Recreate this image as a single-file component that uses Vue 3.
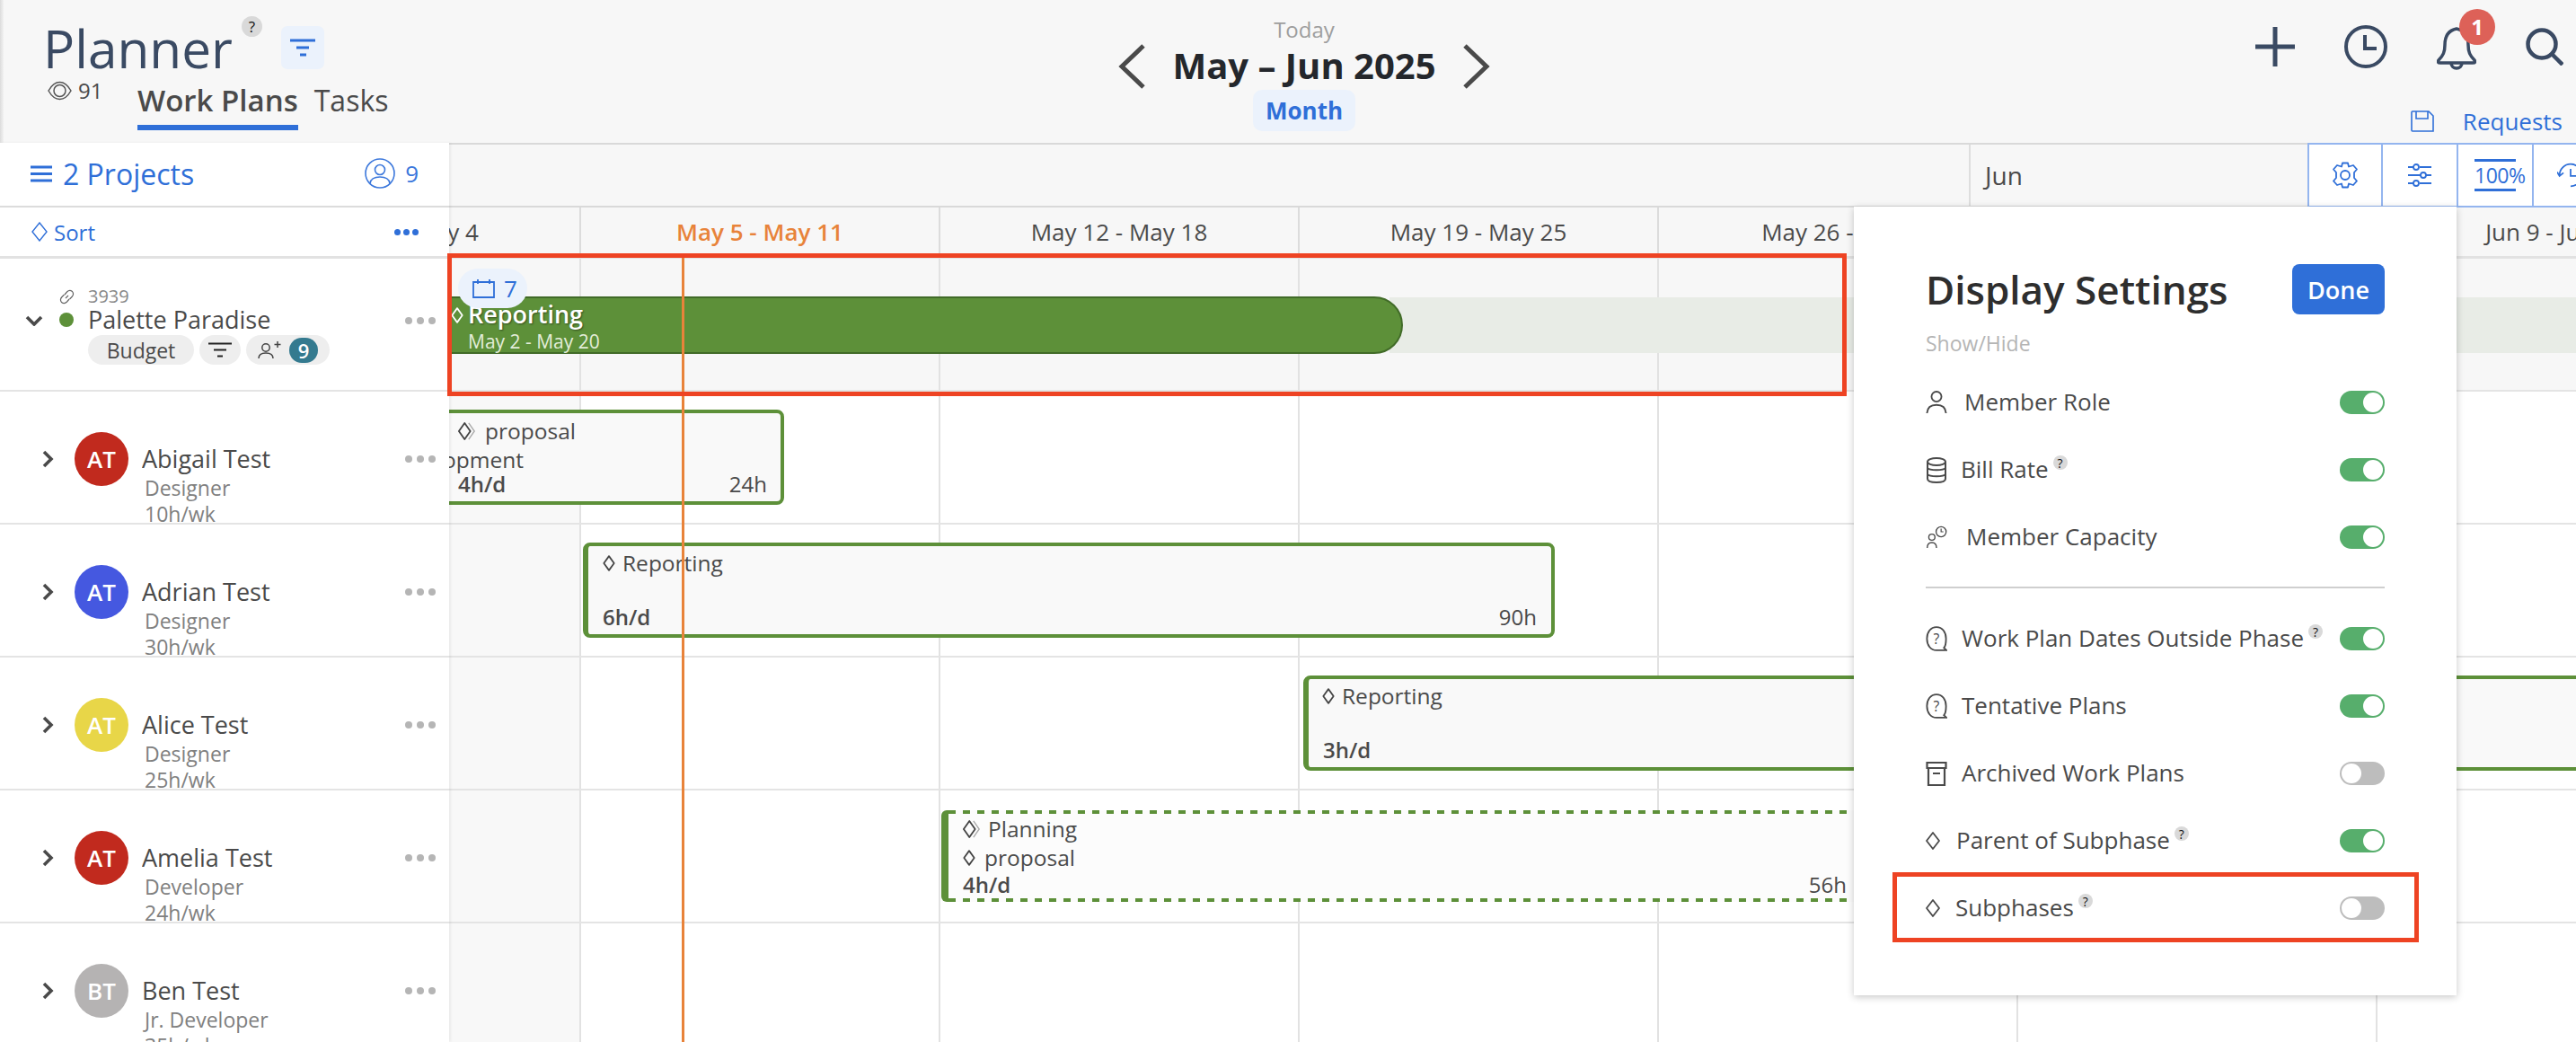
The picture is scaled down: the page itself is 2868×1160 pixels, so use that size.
<script setup>
const weeks = [
  { label: 'Apr 28 - May 4', past: true },
  { label: 'May 5 - May 11', current: true },
  { label: 'May 12 - May 18' },
  { label: 'May 19 - May 25' },
  { label: 'May 26 - Jun 1' },
  { label: 'Jun 2 - Jun 8' },
  { label: 'Jun 9 - Jun 15' },
]
const members = [
  { initials: 'AT', color: '#c12a1e', name: 'Abigail Test', role: 'Designer', hours: '10h/wk' },
  { initials: 'AT', color: '#4558e0', name: 'Adrian Test', role: 'Designer', hours: '30h/wk' },
  { initials: 'AT', color: '#e8d648', name: 'Alice Test', role: 'Designer', hours: '25h/wk' },
  { initials: 'AT', color: '#c12a1e', name: 'Amelia Test', role: 'Developer', hours: '24h/wk' },
  { initials: 'BT', color: '#b5b3b3', name: 'Ben Test', role: 'Jr. Developer', hours: '35h/wk' },
]
const settingsA = [
  { icon: 'i-user', label: 'Member Role', x: 43, on: true },
  { icon: 'i-db', label: 'Bill Rate', x: 39, on: true, help: true },
  { icon: 'i-cap', label: 'Member Capacity', x: 45, on: true },
]
const settingsB = [
  { icon: 'i-q', label: 'Work Plan Dates Outside Phase', x: 40, on: true, help: true },
  { icon: 'i-q', label: 'Tentative Plans', x: 40, on: true },
  { icon: 'i-box', label: 'Archived Work Plans', x: 40, on: false },
  { icon: 'i-pdia', label: 'Parent of Subphase', x: 34, on: true, help: true },
  { icon: 'i-pdia', label: 'Subphases', x: 33, on: false, help: true },
]
</script>

<template>
  <div class="app">
    <svg class="defs" width="0" height="0" aria-hidden="true">
      <symbol id="i-dia" viewBox="0 0 16 24"><path d="M8 3 L14.5 12 L8 21 L1.5 12 Z" fill="none" stroke="currentColor" stroke-width="2" stroke-linejoin="round" /></symbol>
      <symbol id="i-pdia" viewBox="0 0 24 30"><path d="M8 6 L15 15 L8 24 L1 15 Z" fill="none" stroke="currentColor" stroke-width="1.8" stroke-linejoin="round" /></symbol>
      <symbol id="i-dbl" viewBox="0 0 22 24"><path d="M8 2 L15 12 L8 22 L1 12 Z" fill="none" stroke="currentColor" stroke-width="2" stroke-linejoin="round" /><path d="M13 2 L20 12 L13 22" fill="none" stroke="#aaa" stroke-width="1.5" /></symbol>
      <symbol id="i-user" viewBox="0 0 26 30"><circle cx="13" cy="8" r="6" fill="none" stroke="currentColor" stroke-width="2" /><path d="M1.5 28 C2 20 7 18 13 18 C19 18 24 20 24.5 28" fill="none" stroke="currentColor" stroke-width="2" /></symbol>
      <symbol id="i-db" viewBox="0 0 24 30"><ellipse cx="12" cy="6" rx="10" ry="4" fill="none" stroke="currentColor" stroke-width="2" /><path d="M2 6 V25 C2 28 6 29 12 29 C18 29 22 28 22 25 V6 M2 13 C4 16 20 16 22 13 M2 20 C4 23 20 23 22 20" fill="none" stroke="currentColor" stroke-width="2" /></symbol>
      <symbol id="i-cap" viewBox="0 0 28 30"><circle cx="8" cy="15" r="4" fill="none" stroke="currentColor" stroke-width="1.6" /><path d="M2 29 C2 24 5 22 8 22 C11 22 14 24 14 29" fill="none" stroke="currentColor" stroke-width="1.6" /><circle cx="20" cy="8" r="6.5" fill="none" stroke="currentColor" stroke-width="1.6" /><path d="M20 4 V8 H23" fill="none" stroke="currentColor" stroke-width="1.4" /></symbol>
      <symbol id="i-q" viewBox="0 0 26 32"><path d="M25 30 H13 C6 30 1.5 24 1.5 16 C1.5 8 6 2 13 2 C20 2 24.5 8 24.5 16 C24.5 21 24 25 22 27 Z" fill="none" stroke="currentColor" stroke-width="2" /><text x="13" y="22" text-anchor="middle" font-size="17" font-family="Open Sans, sans-serif" fill="currentColor">?</text></symbol>
      <symbol id="i-box" viewBox="0 0 24 30"><path d="M1.5 3 H22.5 V9 H1.5 Z M3 9 V28 H21 V9 M8 15 H16" fill="none" stroke="currentColor" stroke-width="2.2" /></symbol>
    </svg>

    <header class="topbar">
      <div class="title-block">
        <div class="title-row">
          <h1 class="title">Planner</h1>
          <span class="help help-lg">?</span>
          <span class="filter-tile">
            <svg width="28" height="20" viewBox="0 0 28 20"><path d="M0 2 H28 M7 10 H21 M11 18 H18" stroke="#2f6fd8" stroke-width="3" fill="none" /></svg>
          </span>
        </div>
        <div class="sub-row">
          <span class="views">
            <svg width="27" height="22" viewBox="0 0 27 22"><path d="M1 11 C5 4 9 1.5 13.5 1.5 C18 1.5 22 4 26 11 C22 18 18 20.5 13.5 20.5 C9 20.5 5 18 1 11 Z" fill="none" stroke="#555" stroke-width="1.5" /><circle cx="13.5" cy="11" r="6.5" fill="none" stroke="#555" stroke-width="1.5" /></svg>
            91
          </span>
          <nav class="tabs">
            <span class="tab active">Work Plans</span>
            <span class="tab">Tasks</span>
          </nav>
        </div>
      </div>

      <div class="date-block">
        <svg class="chev" width="30" height="52" viewBox="0 0 30 52"><path d="M28 3 L4 26 L28 49" fill="none" stroke="#4a4a4a" stroke-width="5" /></svg>
        <div class="date-center">
          <span class="today">Today</span>
          <span class="range">May – Jun 2025</span>
          <span class="month-pill">Month</span>
        </div>
        <svg class="chev" width="30" height="52" viewBox="0 0 30 52"><path d="M2 3 L26 26 L2 49" fill="none" stroke="#4a4a4a" stroke-width="5" /></svg>
      </div>

      <div class="actions">
        <div class="action-icons">
          <svg width="44" height="44" viewBox="0 0 44 44"><path d="M22 0 V44 M0 22 H44" stroke="#3a4a63" stroke-width="5" /></svg>
          <svg width="48" height="48" viewBox="0 0 48 48"><circle cx="24" cy="24" r="22" fill="none" stroke="#3a4a63" stroke-width="4" /><path d="M23 11 V26 H36" fill="none" stroke="#3a4a63" stroke-width="4" /></svg>
          <span class="bell">
            <svg width="44" height="48" viewBox="0 0 44 48"><path d="M22 2 C12 4 9 12 9 20 C9 28 7 32 2 37 Q0 40 4 40 H40 Q44 40 42 37 C37 32 35 28 35 20 C35 12 32 4 22 2 Z M16 40 C16 48 28 48 28 40" fill="none" stroke="#3a4a63" stroke-width="3.5" /></svg>
            <span class="bell-badge">1</span>
          </span>
          <svg width="42" height="42" viewBox="0 0 42 42"><circle cx="18" cy="18" r="15.5" fill="none" stroke="#3a4a63" stroke-width="4.5" /><path d="M29 29 L41 41" stroke="#3a4a63" stroke-width="4.5" /></svg>
        </div>
        <div class="requests-row">
          <svg width="26" height="24" viewBox="0 0 26 24"><path d="M2 1 H20 L25 6 V23 H2 Q1 23 1 22 V2 Q1 1 2 1 Z M6 1 V9 H19 V1" fill="none" stroke="#2f6fd8" stroke-width="1.6" /></svg>
          <span class="requests">Requests</span>
        </div>
      </div>
    </header>

    <main class="board">
      <aside class="sidebar">
        <div class="side-head">
          <svg width="24" height="19" viewBox="0 0 24 19"><path d="M0 2 H24 M0 9.5 H24 M0 17 H24" stroke="#2f6fd8" stroke-width="3" /></svg>
          <span class="projects">2 Projects</span>
          <svg class="people-ic" width="34" height="34" viewBox="0 0 34 34"><circle cx="17" cy="17" r="16" fill="none" stroke="#3c78dc" stroke-width="1.6" /><circle cx="17" cy="13" r="5.5" fill="none" stroke="#3c78dc" stroke-width="1.6" /><path d="M6 28 C7 22 12 21 17 21 C22 21 27 22 28 28" fill="none" stroke="#3c78dc" stroke-width="1.6" /></svg>
          <span class="people-count">9</span>
        </div>
        <div class="side-sort">
          <svg width="18" height="22" viewBox="0 0 18 22"><path d="M9 1 L17 11 L9 21 L1 11 Z" fill="none" stroke="#2f6fd8" stroke-width="1.4" /></svg>
          <span class="sort">Sort</span>
          <span class="dots blue"><i></i><i></i><i></i></span>
        </div>
        <div class="side-project">
          <svg class="expand" width="20" height="12" viewBox="0 0 20 12"><path d="M2 2 L10 10 L18 2" fill="none" stroke="#4a4a4a" stroke-width="3.6" /></svg>
          <span class="status-dot"></span>
          <div class="project-info">
            <div class="proj-id">
              <svg class="link" width="17" height="17" viewBox="0 0 17 17"><path d="M7 10 L10 7 M6 6 L8.5 3 C10 1.5 12.5 1 14.5 2.5 C16 4.5 15.5 7 14 8.5 L11.5 11 M11 11 L8.5 14 C7 15.5 4.5 16 2.5 14.5 C1 12.5 1.5 10 3 8.5 L5.5 6" fill="none" stroke="#666" stroke-width="1.2" /></svg>
              <span>3939</span>
            </div>
            <div class="proj-name">Palette Paradise</div>
            <div class="pills">
              <span class="pill">Budget</span>
              <span class="pill pill-icon"><svg width="26" height="17" viewBox="0 0 26 17"><path d="M0 1.5 H26 M6 8.5 H20 M10 15.5 H16" stroke="#222" stroke-width="2" /></svg></span>
              <span class="pill pill-people">
                <svg width="26" height="20" viewBox="0 0 26 20"><circle cx="9" cy="7" r="4.2" fill="none" stroke="#444" stroke-width="1.5" /><path d="M1 19 C1 14 5 13 9 13 C13 13 17 14 17 19 M22 0 V7 M18.5 3.5 H25.5" fill="none" stroke="#444" stroke-width="1.5" /></svg>
                <span class="count-badge">9</span>
              </span>
            </div>
          </div>
          <span class="dots"><i></i><i></i><i></i></span>
        </div>
        <div v-for="m in members" :key="m.name" class="side-member">
          <svg class="expand-r" width="13" height="20" viewBox="0 0 13 20"><path d="M2 2 L10 10 L2 18" fill="none" stroke="#4a4a4a" stroke-width="3.6" /></svg>
          <span class="avatar" :style="{ background: m.color }">{{ m.initials }}</span>
          <div class="member-info">
            <div class="member-name">{{ m.name }}</div>
            <div class="member-sub">{{ m.role }}</div>
            <div class="member-sub">{{ m.hours }}</div>
          </div>
          <span class="dots"><i></i><i></i><i></i></span>
        </div>
      </aside>

      <section class="timeline">
        <div class="months">
          <span class="month-spacer"></span>
          <span class="month-cell">Jun</span>
          <div class="tools">
            <span class="tool">
              <svg width="30" height="30" viewBox="0 0 30 30"><path d="M12 1.5 H18 L19 5.5 L24 4 L28 8.5 L25 12 V18 L28 21.5 L24 26 L19 24.5 L18 28.5 H12 L11 24.5 L6 26 L2 21.5 L5 18 V12 L2 8.5 L6 4 L11 5.5 Z" fill="none" stroke="#2f6fd8" stroke-width="1.8" stroke-linejoin="round" /><circle cx="15" cy="15" r="5" fill="none" stroke="#2f6fd8" stroke-width="1.8" /></svg>
            </span>
            <span class="tool">
              <svg width="26" height="26" viewBox="0 0 26 26"><path d="M0 4 H6 M13 4 H26 M0 13 H14 M20 13 H26 M0 22 H6 M13 22 H26" stroke="#2f6fd8" stroke-width="2" /><circle cx="9" cy="4" r="3" fill="none" stroke="#2f6fd8" stroke-width="1.8" /><circle cx="17" cy="13" r="3" fill="none" stroke="#2f6fd8" stroke-width="1.8" /><circle cx="9" cy="22" r="3" fill="none" stroke="#2f6fd8" stroke-width="1.8" /></svg>
            </span>
            <span class="tool"><span class="pct">100%</span></span>
            <span class="tool tool-last">
              <svg width="30" height="30" viewBox="0 0 34 34"><path d="M3 17 A14 14 0 1 1 17 31 M0 13 L3 18 L8 14 M17 9 V18 H24" fill="none" stroke="#2f6fd8" stroke-width="2" /></svg>
            </span>
          </div>
        </div>

        <div class="weeks">
          <div v-for="w in weeks" :key="w.label" class="week-cell" :class="{ current: w.current }">{{ w.label }}</div>
        </div>

        <div class="track track-project">
          <div v-for="w in weeks" :key="w.label" class="cell"></div>
          <div class="band"></div>
          <div class="phase-bar">
            <svg class="phase-dia" width="14" height="24"><use href="#i-dia" /></svg>
            <div class="phase-name">Reporting</div>
            <div class="phase-dates">May 2 - May 20</div>
          </div>
          <span class="cal-chip">
            <svg width="25" height="22" viewBox="0 0 25 22"><path d="M1 4 H24 V21 H1 Z M6 1 V6 M19 1 V6" fill="none" stroke="#2f6fd8" stroke-width="1.8" /></svg>
            7
          </span>
        </div>

        <div v-for="(m, i) in members" :key="'t' + m.name" class="track">
          <div v-for="w in weeks" :key="w.label" class="cell" :class="{ past: w.past }"></div>

          <div v-if="i === 0" class="bar bar-abigail">
            <div class="bar-line first"><svg class="dbl" width="20" height="24"><use href="#i-dbl" /></svg>proposal</div>
            <div class="bar-clip">Development</div>
            <div class="bar-foot"><b>4h/d</b><span>24h</span></div>
          </div>
          <div v-if="i === 1" class="bar bar-adrian">
            <div class="bar-line first"><svg class="dia" width="14" height="22"><use href="#i-dia" /></svg>Reporting</div>
            <div class="bar-foot"><b>6h/d</b><span>90h</span></div>
          </div>
          <div v-if="i === 2" class="bar bar-alice">
            <div class="bar-line first"><svg class="dia" width="14" height="22"><use href="#i-dia" /></svg>Reporting</div>
            <div class="bar-foot"><b>3h/d</b></div>
          </div>
          <div v-if="i === 3" class="bar bar-amelia">
            <div class="bar-line"><svg class="dbl" width="20" height="24"><use href="#i-dbl" /></svg>Planning</div>
            <div class="bar-line second"><svg class="dia" width="14" height="22"><use href="#i-dia" /></svg>proposal</div>
            <div class="bar-foot amelia-foot"><b>4h/d</b><span>56h</span></div>
          </div>
        </div>

        <div class="today-line"></div>
      </section>
    </main>

    <div class="panel">
      <div class="panel-head">
        <h2 class="panel-title">Display Settings</h2>
        <button class="done">Done</button>
      </div>
      <div class="show-hide">Show/Hide</div>
      <div v-for="s in settingsA" :key="s.label" class="set-row">
        <svg class="set-ic"><use :href="'#' + s.icon" /></svg>
        <span class="set-label" :style="{ left: s.x + 'px' }">{{ s.label }}<span v-if="s.help" class="help help-sm">?</span></span>
        <span class="toggle" :class="{ on: s.on }"><i></i></span>
      </div>
      <div class="divider"></div>
      <div v-for="s in settingsB" :key="s.label" class="set-row">
        <svg class="set-ic"><use :href="'#' + s.icon" /></svg>
        <span class="set-label" :style="{ left: s.x + 'px' }">{{ s.label }}<span v-if="s.help" class="help help-sm">?</span></span>
        <span class="toggle" :class="{ on: s.on }"><i></i></span>
      </div>
    </div>

    <div class="mark mark-bar"></div>
    <div class="mark mark-sub"></div>
    <div class="edge"></div>
  </div>
</template>

<style>
html, body { margin: 0; padding: 0; background: #f7f7f7; }
</style>

<style scoped>
.app {
  position: relative;
  width: 2868px;
  height: 1160px;
  overflow: hidden;
  background: #f7f7f7;
  font-family: "Open Sans", "Noto Sans", sans-serif;
  color: #4a4a4a;
}
.defs { position: absolute; }
.edge { position: absolute; left: 0; top: 0; bottom: 0; width: 4px; background: linear-gradient(90deg, #dcdcdc, #f2f2f2); }

/* header */
.topbar {
  height: 159px;
  padding-left: 36px;
  display: grid;
  grid-template-columns: 1fr auto 1fr;
  box-sizing: border-box;
}
.title-block { padding: 23px 0 0 12px; }
.title-row { display: flex; align-items: flex-start; height: 60px; }
.title { margin: 0; font-size: 58.5px; line-height: 60px; font-weight: 500; color: #3a4a63; letter-spacing: 0; }
.help {
  display: inline-flex; align-items: center; justify-content: center;
  border-radius: 50%; background: #d9d9d9; color: #111; font-family: "Open Sans", sans-serif;
}
.help-lg { width: 23px; height: 23px; font-size: 17px; margin: -5px 0 0 10px; }
.filter-tile {
  width: 48px; height: 48px; margin: 6px 0 0 21px; border-radius: 7px; background: #ebf2fc;
  display: flex; align-items: center; justify-content: center;
}
.sub-row { display: flex; align-items: flex-start; margin-top: 8px; padding-left: 5px; }
.views { display: flex; align-items: center; gap: 7px; font-size: 24px; line-height: 36px; width: 100px; color: #4a4a4a; margin-top: -8px; }
.tabs { display: flex; gap: 18px; }
.tab { font-size: 32px; line-height: 42px; padding-bottom: 6px; border-bottom: 6px solid transparent; color: #4a4a4a; }
.tab.active { font-size: 33px; font-weight: 600; border-bottom-color: #2f6fd8; }

.date-block { display: flex; align-items: flex-start; gap: 30px; padding-top: 48px; }
.chev { flex: none; }
.date-center { display: flex; flex-direction: column; align-items: center; margin-top: -32px; }
.today { font-size: 24px; line-height: 34px; font-weight: 500; color: #9e9e9e; }
.range { font-size: 40px; line-height: 46px; font-weight: 700; color: #24272c; letter-spacing: 0; }
.month-pill { margin-top: 4px; width: 114px; text-align: center; height: 46px; line-height: 46px; font-size: 26px; font-weight: 700; color: #2f6fd8; background: #ebf2fc; border-radius: 10px; }

.actions { display: flex; flex-direction: column; align-items: flex-end; }
.action-icons { display: flex; align-items: center; gap: 55px; height: 50px; margin: 27px 14px 0 0; }
.bell { position: relative; display: flex; margin-top: 4px; }
.bell-badge {
  position: absolute; left: 25px; top: -20px; width: 40px; height: 40px; border-radius: 50%;
  background: #dd6158; color: #fff; font-size: 24px; font-weight: 700; text-align: center; line-height: 40px;
}
.requests-row { display: flex; align-items: center; gap: 32px; margin: 40px 15px 0 0; }
.requests { font-size: 26px; line-height: 36px; font-weight: 500; color: #2f6fd8; }

/* board */
.board { display: flex; height: 1001px; }
.sidebar { width: 500px; flex: none; background: #fff; position: relative; z-index: 3; box-shadow: 2px 0 3px rgba(0,0,0,.06); }
.side-head { height: 72px; display: flex; align-items: center; padding: 0 34px 2px; box-sizing: border-box; border-bottom: 2px solid #dcdcdc; }
.projects { margin-left: 12px; font-size: 32px; font-weight: 500; color: #2f6fd8; flex: 1; }
.people-ic { margin-right: 11px; }
.people-count { font-size: 26px; color: #3c78dc; }
.side-sort { height: 57px; display: flex; align-items: center; padding: 0 34px 0 35px; box-sizing: border-box; border-bottom: 3px solid #e2e2e2; }
.sort { margin-left: 7px; font-size: 24px; color: #2f6fd8; flex: 1; }

.dots { display: flex; gap: 5px; flex: none; }
.dots i { width: 8px; height: 8px; border-radius: 50%; background: #b5b5b5; display: block; }
.dots.blue { gap: 3px; }
.dots.blue i { width: 7px; height: 7px; background: #2f6fd8; }

.side-project { height: 148px; box-sizing: border-box; border-bottom: 2px solid #e4e4e4; display: flex; align-items: flex-start; padding: 0 15px 0 28px; position: relative; }
.expand { flex: none; margin-top: 63px; }
.status-dot { width: 16px; height: 16px; border-radius: 50%; background: #5d9039; margin: 60px 0 0 18px; flex: none; }
.project-info { margin: 30px 0 0 16px; flex: 1; }
.proj-id { position: relative; font-size: 20px; line-height: 24px; color: #888; }
.link { position: absolute; left: -32px; top: 4px; }
.proj-name { font-size: 27px; line-height: 36px; font-weight: 500; color: #4a4a4a; margin-top: -4px; }
.pills { display: flex; gap: 6px; margin-top: -1px; }
.pill { height: 33px; border-radius: 17px; background: #eee; display: flex; align-items: center; justify-content: center; font-size: 23px; font-weight: 500; width: 118px; }
.pill-icon { width: 46px; }
.pill-people { width: 93px; justify-content: flex-start; gap: 9px; padding-left: 13px; box-sizing: border-box; }
.count-badge { width: 32px; height: 28px; border-radius: 14px; background: #347a8f; color: #fff; text-align: center; font-size: 22px; line-height: 28px; font-weight: 600; }
.side-project .dots { margin-top: 65px; }

.side-member { height: 148px; box-sizing: border-box; border-bottom: 2px solid #e4e4e4; display: flex; align-items: flex-start; padding: 0 15px 0 47px; overflow: hidden; }
.expand-r { flex: none; margin-top: 65px; }
.avatar { width: 60px; height: 60px; border-radius: 50%; flex: none; margin: 45px 0 0 23px; color: #fff; font-weight: 600; font-size: 26px; line-height: 60px; text-align: center; }
.member-info { flex: 1; margin: 56px 0 0 15px; overflow: hidden; }
.member-name { font-size: 27px; line-height: 37px; font-weight: 500; color: #4a4a4a; }
.member-sub { font-size: 23px; line-height: 29px; color: #808080; padding-left: 3px; }
.side-member .dots { margin-top: 71px; }

.timeline { flex: 1; min-width: 0; position: relative; overflow: hidden; }
.months { height: 72px; display: flex; box-sizing: border-box; border-top: 2px solid #d9d9d9; border-bottom: 2px solid #d9d9d9; }
.month-spacer { width: 1692px; flex: none; }
.month-cell { width: 377px; flex: none; box-sizing: border-box; border-left: 2px solid #dedede; font-size: 28px; line-height: 68px; padding-left: 16px; color: #4a4a4a; }
.tools { display: flex; flex: none; margin-top: -2px; }
.tool { width: 84px; height: 72px; box-sizing: border-box; flex: none; background: #fff; border: 2px solid #94b5ef; display: flex; align-items: center; justify-content: center; }
.tool + .tool { border-left: 0; }
.pct { width: 46px; border-top: 3px solid #2f6fd8; border-bottom: 3px solid #2f6fd8; font-size: 23px; line-height: 30px; color: #2f6fd8; letter-spacing: -0.5px; white-space: nowrap; }

.weeks { height: 57px; display: flex; margin-left: -253px; box-sizing: border-box; border-bottom: 3px solid #e2e2e2; }
.week-cell { width: 400px; flex: none; box-sizing: border-box; border-right: 2px solid #dcdcdc; text-align: center; font-size: 26px; line-height: 54px; color: #4a4a4a; white-space: nowrap; }
.week-cell.current { color: #e8833a; font-weight: 600; }

.track { position: relative; height: 148px; display: flex; margin-left: -253px; box-sizing: border-box; border-bottom: 2px solid #e4e4e4; background: #fff; }
.track-project { background: #f7f7f7; }
.cell { width: 400px; flex: none; box-sizing: border-box; border-right: 2px solid #e2e2e2; }
.cell.past { background: #f8f8f8; }

.band { position: absolute; left: 1300px; top: 43px; width: 1400px; height: 62px; background: #e8ece6; }
.phase-bar {
  position: absolute; left: 200px; top: 42px; width: 1115px; height: 64px; box-sizing: border-box;
  background: #5d9039; border: 2px solid #416b28; border-radius: 0 32px 32px 0; color: #fff;
  padding-left: 72px; padding-top: 1px;
}
.phase-dia { position: absolute; left: 53px; top: 7px; color: #fff; }
.phase-name { font-size: 27px; line-height: 34px; font-weight: 600; text-shadow: 1px 1px 2px rgba(0,0,0,.45); }
.phase-dates { font-size: 21px; line-height: 26px; color: #e3edd9; }
.cal-chip {
  position: absolute; left: 263px; top: 11px; width: 77px; height: 44px; border-radius: 22px; background: #ebf2fc;
  color: #2f6fd8; font-size: 26px; display: flex; align-items: center; gap: 10px; padding-left: 16px; box-sizing: border-box;
}

.bar { position: absolute; box-sizing: border-box; background: #f9f9f9; border: 4px solid #5d9039; border-left-width: 6px; border-radius: 8px; color: #4a4a4a; font-size: 24.5px; line-height: 36px; }
.bar-line { display: flex; align-items: center; white-space: nowrap; }
.bar-line svg { flex: none; color: #444; }
.bar-foot { display: flex; justify-content: space-between; font-size: 24px; line-height: 32px; position: absolute; left: 16px; right: 16px; bottom: 3px; }
.bar-foot b { font-weight: 600; }
.bar-abigail { left: 153px; top: 20px; width: 473px; height: 106px; border-left-width: 4px; }
.bar-abigail .first { position: absolute; left: 106px; top: 2px; gap: 10px; }
.bar-clip { position: absolute; right: 286px; top: 34px; white-space: nowrap; }
.bar-abigail .bar-foot { left: 106px; right: 15px; }
.bar-adrian { left: 402px; top: 20px; width: 1082px; height: 106px; }
.bar-adrian .first { margin: 1px 0 0 16px; gap: 8px; }
.bar-alice { left: 1204px; top: 20px; width: 1500px; height: 106px; }
.bar-alice .first { margin: 1px 0 0 15px; gap: 8px; }
.bar-amelia {
  left: 801px; top: 22px; width: 1022px; height: 102px; background: #fcfcfc; border: 0; border-left: 8px solid #5d9039;
  background-image: repeating-linear-gradient(90deg, #5d9039 0 8px, transparent 8px 16px), repeating-linear-gradient(90deg, #5d9039 0 8px, transparent 8px 16px);
  background-size: 100% 4px, 100% 4px; background-position: 0 0, 0 100%; background-repeat: no-repeat;
  border-radius: 6px 0 0 6px; padding: 5px 0 0 16px; line-height: 32px;
}
.bar-amelia .bar-line { gap: 8px; }
.bar-amelia .second { gap: 10px; }
.amelia-foot { left: 16px; right: 14px; }

.today-line { position: absolute; left: 259px; top: 126px; bottom: 0; width: 3px; background: #e8833a; z-index: 2; }

/* settings */
.panel {
  position: absolute; left: 2064px; top: 230px; width: 671px; height: 878px; box-sizing: border-box; background: #fff; z-index: 4;
  padding: 64px 80px 60px 80px; box-shadow: 0 2px 8px rgba(0,0,0,.22);
}
.panel-head { display: flex; align-items: center; justify-content: space-between; height: 56px; }
.panel-title { margin: 0; font-size: 44px; font-weight: 600; color: #2e2e2e; line-height: 56px; }
.done { width: 103px; height: 56px; border: 0; border-radius: 8px; background: #2f6fd8; color: #fff; font: 600 27px "Open Sans", sans-serif; padding: 0; }
.show-hide { font-size: 23px; line-height: 32px; color: #b5b5b5; margin-top: 16px; height: 44px; }
.set-row { position: relative; height: 75px; display: flex; align-items: center; justify-content: space-between; }
.set-ic { width: 24px; height: 30px; color: #4a4a4a; }
.set-label { position: absolute; top: 0; line-height: 75px; font-size: 26px; color: #4a4a4a; white-space: nowrap; }
.help-sm { position: absolute; width: 16px; height: 16px; font-size: 14px; margin: 22px 0 0 5px; }
.divider { height: 2px; background: #cfcfcf; margin: 18px 0 18px; }
.toggle { width: 50px; height: 26px; border-radius: 13px; background: #bdbdbd; box-sizing: border-box; display: flex; padding: 2px; justify-content: flex-start; }
.toggle i { display: block; width: 22px; height: 22px; border-radius: 50%; background: #fff; }
.toggle.on { background: #57ae6c; justify-content: flex-end; }

/* annotation frames */
.mark { position: absolute; box-sizing: border-box; border: 5px solid #ee4323; z-index: 5; }
.mark-bar { left: 498px; top: 282px; width: 1558px; height: 159px; }
.mark-sub { left: 2107px; top: 971px; width: 586px; height: 78px; }
</style>
